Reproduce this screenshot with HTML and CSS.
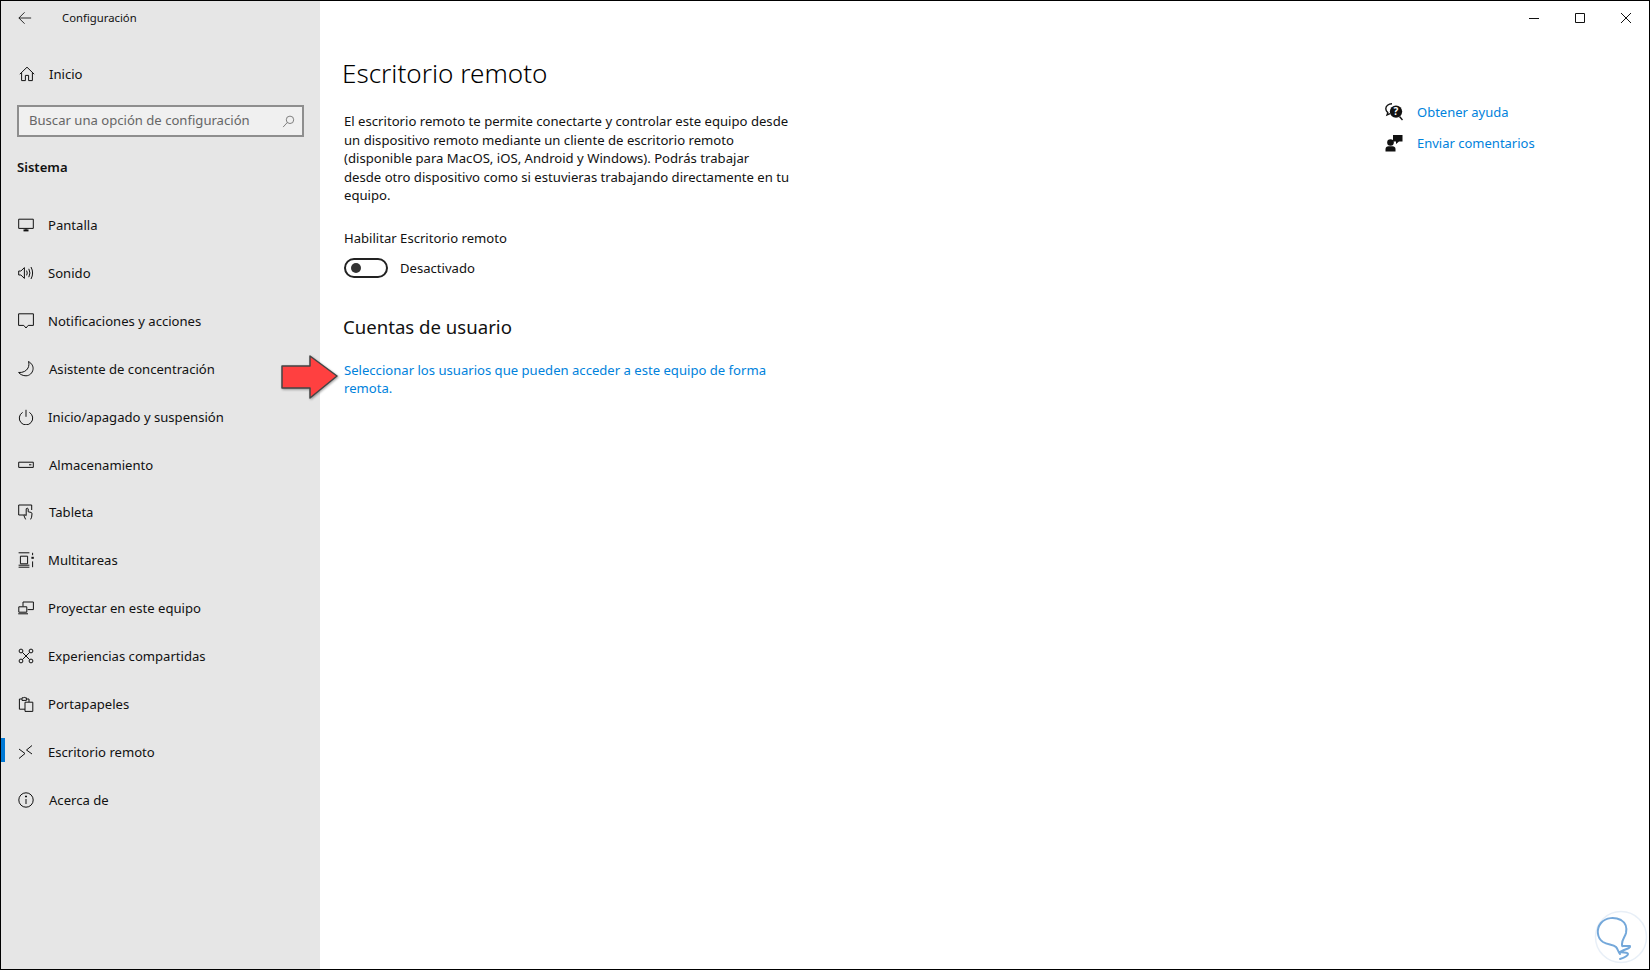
FILE: index.html
```html
<!DOCTYPE html>
<html lang="es">
<head>
<meta charset="utf-8">
<title>Configuración</title>
<link rel="stylesheet" href="styles.css">
</head>
<body>
<div class="window">
  <aside class="sidebar">
    <div class="titlebar">
      <svg class="back" viewBox="0 0 16 16"><path d="M1 8h14M7.500 1.500 1 8l6.500 6.500"/></svg>
      <span class="apptitle">Configuración</span>
    </div>
    <a class="home">
      <svg class="ico" viewBox="0 0 16 16"><path d="M.8 8.200 8 1.200l7.200 7M2.600 6.600v8h3.800V9.400h3.200v5.200h3.800v-8"/></svg>
      <span>Inicio</span>
    </a>
    <div class="search">
      <span>Buscar una opción de configuración</span>
      <svg class="searchico" viewBox="0 0 14 14"><circle cx="8.600" cy="5.200" r="4"/><path d="M5.800 8 1.200 13"/></svg>
    </div>
    <div class="section">Sistema</div>
    <nav class="nav">
      <a class="item"><svg class="ico" viewBox="0 0 16 16"><path d="M.7 2.200h14.600v9.200H.7zM8 11.400v2.200"/><path class="thick" d="M5.500 13.400h5"/></svg><span>Pantalla</span></a>
      <a class="item"><svg class="ico" viewBox="0 0 16 16"><path d="M.7 6h2.200L6.400 2.600v10.800L2.900 10H.7zM8.600 5.600q1.300 2.400 0 4.800M10.800 3.800q2.300 4.200 0 8.400M13 2q3.200 6 0 12"/></svg><span>Sonido</span></a>
      <a class="item"><svg class="ico" viewBox="0 0 16 16"><path d="M.6.800h14.800v11.600h-5.200L8 15l-2.200-2.600H.6z"/></svg><span>Notificaciones y acciones</span></a>
      <a class="item nudge"><svg class="ico" viewBox="0 0 16 16"><path d="M10.500.5C14 2.500 15.500 5.500 15 8.500 14.500 12 11.500 14.800 8 14.800 5 14.800 2.300 13.500.6 11.500 5 11.800 8.500 10 10 7 11 5 11.200 2.500 10.500.5z"/></svg><span>Asistente de concentración</span></a>
      <a class="item"><svg class="ico" viewBox="0 0 16 16"><path d="M8 .8v7M4.600 3.400a6.700 6.700 0 1 0 6.800 0"/></svg><span>Inicio/apagado y suspensión</span></a>
      <a class="item nudge"><svg class="ico" viewBox="0 0 16 16"><path d="M.7 5.200h14.600v5.200H.7zM11 7.800h2.400"/></svg><span>Almacenamiento</span></a>
      <a class="item nudge"><svg class="ico" viewBox="0 0 16 16"><path d="M6 11H.7V1h13v5M7.600 15.400l-1.500-3.400q-.4-1.200.8-1.400l1.300 1V4.800q1-1.400 2 0v3l2.800.6q1 .3 1 1.400l-.4 3.400-1 2.200"/></svg><span>Tableta</span></a>
      <a class="item"><svg class="ico" viewBox="0 0 16 16"><path d="M.6.800h10.800M.6 15.200h10.800M2.400 4.200h7.200v7.600H2.400zM.6 13.200h10.800M14.600.8v2.400M14.600 9.400v5.800"/><path class="thick" d="M13.400 5.800h2.400"/></svg><span>Multitareas</span></a>
      <a class="item"><svg class="ico" viewBox="0 0 16 16"><path d="M5 6.400V2h10.400v7.600H9.600M.8 6.800h8v5.400h-8zM.2 13.800h9.800"/></svg><span>Proyectar en este equipo</span></a>
      <a class="item"><svg class="ico" viewBox="0 0 16 16"><circle cx="3" cy="3" r="1.900"/><circle cx="13" cy="3" r="1.900"/><circle cx="3" cy="13" r="1.900"/><circle cx="13" cy="13" r="1.900"/><path d="m4.400 4.400 7.200 7.200M11.600 4.400l-7.200 7.200"/></svg><span>Experiencias compartidas</span></a>
      <a class="item"><svg class="ico" viewBox="0 0 16 16"><path d="M7 13.200H1.400V3h2.400M8.600 3H11v3M4 3V1.800h1.500q.6-1.400 1.500 0h1.400V4.400H4zM7 6.200h7.800v9.200H7z"/></svg><span>Portapapeles</span></a>
      <a class="item active"><svg class="ico" viewBox="0 0 16 16"><path d="m1 5 6 4.500L1 14.500M14 1.500 8.500 6l5.500 4"/></svg><span>Escritorio remoto</span></a>
      <a class="item nudge"><svg class="ico" viewBox="0 0 16 16"><circle cx="8" cy="8" r="7.200"/><path d="M8 7v5"/><path class="thick" d="M8 3.800v1.400"/></svg><span>Acerca de</span></a>
    </nav>
  </aside>
  <main class="content">
    <div class="controls">
      <svg class="ctl" viewBox="0 0 10 10"><path d="M0 5.500h10"/></svg>
      <svg class="ctl" viewBox="0 0 10 10"><path d="M.5.500h9v9h-9z"/></svg>
      <svg class="ctl" viewBox="0 0 10 10"><path d="m0 0 10 10M10 0 0 10"/></svg>
    </div>
    <div class="columns">
      <section class="body">
        <h1>Escritorio remoto</h1>
        <p class="desc">El escritorio remoto te permite conectarte y controlar este equipo desde<br>un dispositivo remoto mediante un cliente de escritorio remoto<br>(disponible para MacOS, iOS, Android y Windows). Podrás trabajar<br>desde otro dispositivo como si estuvieras trabajando directamente en tu<br>equipo.</p>
        <div class="label">Habilitar Escritorio remoto</div>
        <div class="togglerow">
          <span class="toggle"><span class="knob"></span></span>
          <span>Desactivado</span>
        </div>
        <h2>Cuentas de usuario</h2>
        <a class="link">Seleccionar los usuarios que pueden acceder a este equipo de forma<br>remota.</a>
      </section>
      <aside class="help">
        <a class="helprow">
          <svg class="helpico" viewBox="0 0 18 18"><path class="line" d="M7 .8C3.400.8.800 3 .800 5.800c0 1.600.8 2.800 2 3.800L2 12l3-1.400"/><circle class="fill" cx="11" cy="8.600" r="6.200"/><path class="line" d="m14.500 13.500 3 3.500"/><text class="q" x="11" y="12">?</text></svg>
          <span>Obtener ayuda</span>
        </a>
        <a class="helprow">
          <svg class="helpico" viewBox="0 0 18 18"><circle class="fill" cx="5.500" cy="8.500" r="3.300"/><path class="fill" d="M.5 17.500v-2.500q.3-2.800 3-2.800h4q2.800 0 3 2.800v2.500z"/><path class="fill" d="M8 1h9.500v6.500h-3.500L11 10V7.500H8z"/></svg>
          <span>Enviar comentarios</span>
        </a>
      </aside>
    </div>
  </main>
  <svg class="arrow" viewBox="0 0 62 48"><path d="M3 12h28V2l27 20-27 22V34H3z"/></svg>
  <svg class="mark" viewBox="0 0 56 56"><circle class="ring" cx="28" cy="28" r="25.500"/><path class="squig" d="M27 45c-2-2-2-5-4-7-3-3-8-2-13-5C4 29 3 20 8 14c5-6 14-6 20-3 5 3 6 8 5 13-1 4-4 6-4 11 0 3 0 2 3 2 3 0 4 0 5 0 1 2-4 3-6 4l-4 2c3 1 8 0 8 2 0 2-5 4-8 5"/></svg>
</div>
</body>
</html>
```

FILE: styles.css
```css
* { box-sizing: border-box; }
html, body { margin: 0; height: 100%; }
body { font-family: "Noto Sans", "Open Sans", sans-serif; color: #111; background: #fff; overflow: hidden; }
a { text-decoration: none; color: inherit; display: block; }
svg path, svg circle { fill: none; stroke: currentColor; stroke-width: 1; }

.window { position: relative; width: 1650px; height: 970px; border: 1px solid #000; display: flex; background: #fff; }

.sidebar { width: 319px; flex: none; background: #e6e6e6; }
.titlebar { height: 33px; display: flex; align-items: center; padding-left: 17px; }
.back { width: 14px; height: 14px; color: #111; }
.apptitle { margin-left: 30px; font-size: 11.3px; }

.home { height: 48px; margin-top: 16px; display: flex; align-items: center; padding-left: 18px; font-size: 13.1px; }
.home span { margin-left: 14px; }
.ico { width: 16px; height: 16px; flex: none; color: #111; }
.ico .thick { stroke-width: 2; }

.search { height: 32px; margin: 7px 16px 0 16px; border: 2px solid #8e8e8e; background: #f0f0f0; display: flex; align-items: center; justify-content: space-between; padding: 0 7px 2px 10px; font-size: 13.1px; color: #666; }
.searchico { width: 13px; height: 13px; color: #777; margin-top: 2px; }

.section { margin: 20px 0 0 16px; font-size: 13.1px; font-weight: 600; line-height: 20px; }

.nav { margin-top: 24px; }
.item { position: relative; height: 47.93px; display: flex; align-items: center; padding-left: 17px; font-size: 13.1px; }
.item span { margin-left: 14px; }
.item.nudge span { margin-left: 15px; }
.item.active::before { content: ""; position: absolute; left: 0; top: 10px; width: 4px; height: 24px; background: #0078d4; }

.content { flex: 1; min-width: 0; display: flex; flex-direction: column; }
.controls { height: 33px; display: flex; justify-content: flex-end; align-items: center; gap: 36px; padding-right: 18px; }
.ctl { width: 10px; height: 10px; color: #111; }

.columns { flex: 1; display: flex; justify-content: space-between; }
.body { padding-left: 22px; width: 600px; }
h1 { margin: 21px 0 0; font-size: 26.1px; font-weight: 300; line-height: 36px; color: #000; }
.desc { margin: 21px 0 0 2px; font-size: 13.13px; line-height: 18.5px; }
.label { margin: 23px 0 0 2px; font-size: 13.1px; line-height: 20px; }
.togglerow { display: flex; align-items: center; margin: 10px 0 0 2px; font-size: 13.1px; gap: 12px; }
.toggle { width: 44px; height: 20px; border: 2px solid #222; border-radius: 10px; display: flex; align-items: center; padding-left: 5px; }
.knob { width: 10px; height: 10px; border-radius: 50%; background: #333; }
h2 { margin: 35px 0 0 1px; font-size: 18.6px; font-weight: 400; line-height: 28px; }
.link { margin: 20px 0 0 2px; font-size: 13.1px; line-height: 18.4px; color: #0082dc; }

.help { width: 263px; flex: none; padding-top: 62px; }
.helprow { display: flex; align-items: center; height: 31px; font-size: 13px; color: #0082dc; gap: 14px; }
.helpico { width: 18px; height: 18px; color: #111; flex: none; margin-left: -1px; }
.helpico .fill { fill: #111; stroke: none; }
.helpico .line { stroke-width: 1.400; }
.helpico .q { fill: #fff; font-size: 10px; font-weight: 700; text-anchor: middle; font-family: "Noto Sans", sans-serif; }

.arrow { position: absolute; left: 278px; top: 353px; width: 62px; height: 48px; filter: drop-shadow(1px 1px 1px rgba(0,0,0,.35)); }
.arrow path { fill: #ff4040; stroke: #444; stroke-width: 1.500; stroke-linejoin: round; }
.mark { position: absolute; left: 1592px; top: 908px; width: 56px; height: 56px; }
.mark .ring { stroke: #e8eff7; stroke-width: 1.500; }
.mark .squig { stroke: #74a8da; stroke-width: 2; stroke-linecap: round; stroke-linejoin: round; }
```
